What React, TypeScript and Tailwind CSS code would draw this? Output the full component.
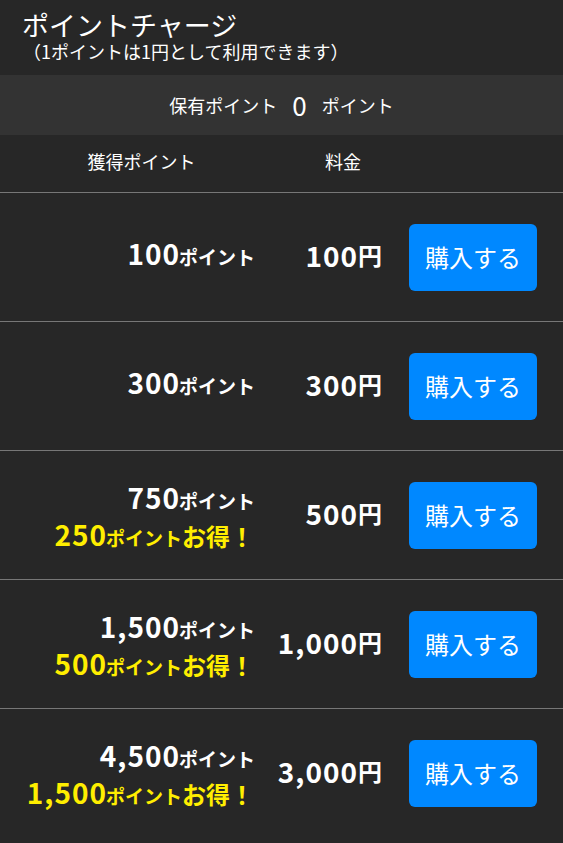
import React from "react";

type Plan = { points: string; price: string; bonus?: string };

const plans: Plan[] = [
  { points: "100", price: "100" },
  { points: "300", price: "300" },
  { points: "750", price: "500", bonus: "250" },
  { points: "1,500", price: "1,000", bonus: "500" },
  { points: "4,500", price: "3,000", bonus: "1,500" },
];

const font = {
  fontFamily: '"Noto Sans CJK JP", "Noto Sans", sans-serif',
};

function Num({ value }: { value: string }) {
  return <span className="text-[28px] tracking-[1px] -mr-[1px]">{value}</span>;
}

function PlanRow({ plan }: { plan: Plan }) {
  return (
    <div className="grid grid-cols-[283px_120px_1fr] items-center h-[129px] border-t border-[#777777]">
      <div
        className={
          plan.bonus
            ? "flex flex-col items-end pr-[28px] pt-[6px] leading-[32px]"
            : "flex flex-col items-end pr-[28px] pb-[4px] leading-[32px]"
        }
      >
        <div className="font-bold text-white">
          <Num value={plan.points} />
          <span className="text-[19px]">ポイント</span>
        </div>
        {plan.bonus && (
          <div className="font-bold text-[#ffee00] pr-[1px]">
            <Num value={plan.bonus} />
            <span className="text-[19px]">ポイント</span>
            <span className="text-[24px]">お得！</span>
          </div>
        )}
      </div>
      <div className="flex justify-end pr-[21px] pb-[5px] font-bold text-white leading-[36px]">
        <Num value={plan.price} />
        <span className="text-[24px] ml-[1px]">円</span>
      </div>
      <div className="pl-[6px]">
        <button className="w-[128px] h-[67px] rounded-[6px] bg-[#0088ff] text-white text-[24px] leading-none">
          購入する
        </button>
      </div>
    </div>
  );
}

export default function App() {
  return (
    <div className="w-[563px] h-[843px] overflow-hidden bg-[#272727] text-white" style={font}>
      <div className="h-[75px] pl-[22px] pt-[9px]">
        <div className="text-[27px] leading-[32px]">ポイントチャージ</div>
        <div className="text-[18px] leading-[20px] pl-[1px]">（1ポイントは1円として利用できます）</div>
      </div>
      <div className="h-[60px] bg-[#333333] flex items-center justify-center">
        <span className="text-[18px]">保有ポイント</span>
        <span className="text-[26px] mx-[15px] leading-none">0</span>
        <span className="text-[18px]">ポイント</span>
      </div>
      <div className="grid grid-cols-[283px_120px_1fr] items-center h-[57px] text-[18px] pb-[4px]">
        <div className="text-center">獲得ポイント</div>
        <div className="text-center">料金</div>
        <div />
      </div>
      {plans.map((p) => (
        <PlanRow key={p.points} plan={p} />
      ))}
    </div>
  );
}
